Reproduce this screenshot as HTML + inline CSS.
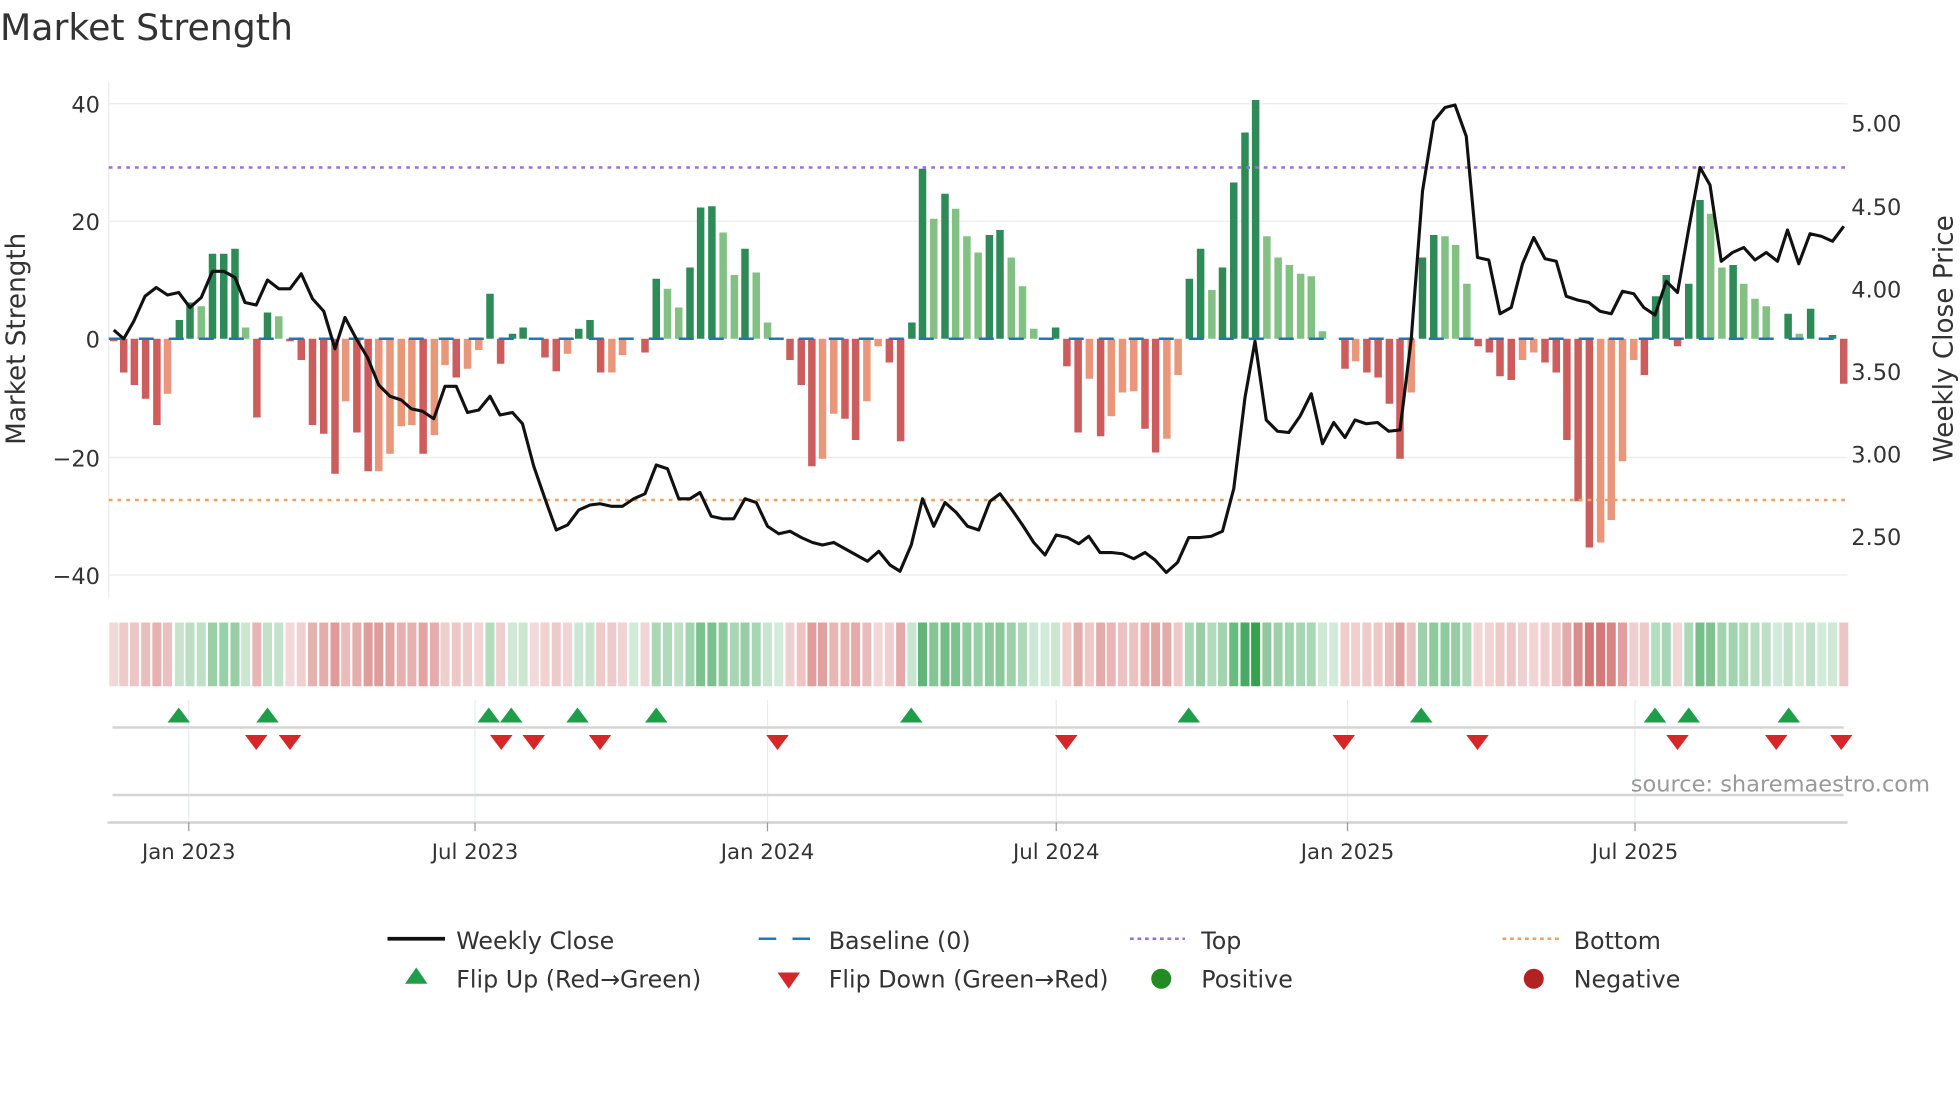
<!DOCTYPE html>
<html><head><meta charset="utf-8"><style>
html,body{margin:0;padding:0;background:#fff;}
svg{display:block;}
text{font-family:"DejaVu Sans","Liberation Sans",sans-serif;fill:#333;}
</style></head><body>
<svg id="s" width="1960" height="1102" viewBox="0 0 1568 881.6" xmlns="http://www.w3.org/2000/svg">
<text x="0" y="32" font-size="29">Market Strength</text>
<g stroke="#ececec" stroke-width="1">
<line x1="87" y1="83" x2="1478" y2="83"/><line x1="87" y1="177" x2="1478" y2="177"/>
<line x1="87" y1="366" x2="1478" y2="366"/><line x1="87" y1="460" x2="1478" y2="460"/>
<line x1="87" y1="65" x2="87" y2="478"/>
</g>
<g font-size="18" text-anchor="end">
<text x="80" y="90">40</text><text x="80" y="184">20</text><text x="80" y="278">0</text>
<text x="80" y="373">−20</text><text x="80" y="467">−40</text>
</g>
<g font-size="18">
<text x="1481" y="105">5.00</text><text x="1481" y="172">4.50</text><text x="1481" y="238">4.00</text>
<text x="1481" y="304">3.50</text><text x="1481" y="370">3.00</text><text x="1481" y="436">2.50</text>
</g>
<text font-size="21" text-anchor="middle" transform="translate(20,271) rotate(-90)">Market Strength</text>
<text font-size="21" text-anchor="middle" transform="translate(1562,271) rotate(-90)">Weekly Close Price</text>
<g id="bars"></g>
<line x1="87" y1="271" x2="1478" y2="271" stroke="#1f77b4" stroke-width="2" stroke-dasharray="12 12"/>
<line x1="87" y1="134" x2="1478" y2="134" stroke="#9b6fdc" stroke-width="2" stroke-dasharray="3 4"/>
<line x1="87" y1="400" x2="1478" y2="400" stroke="#f0a060" stroke-width="2" stroke-dasharray="3 4"/>
<polyline id="price" fill="none" stroke="#111" stroke-width="2.5" stroke-linejoin="round"/>
<g id="heat"></g>
<g stroke="#e8ecef" stroke-width="1">
<line x1="151" y1="560" x2="151" y2="658"/><line x1="380" y1="560" x2="380" y2="658"/>
<line x1="614" y1="560" x2="614" y2="658"/><line x1="845" y1="560" x2="845" y2="658"/>
<line x1="1078" y1="560" x2="1078" y2="658"/><line x1="1308" y1="560" x2="1308" y2="658"/>
</g>
<line x1="90" y1="582" x2="1475" y2="582" stroke="#d5d5d5" stroke-width="2"/>
<line x1="90" y1="636" x2="1475" y2="636" stroke="#d5d5d5" stroke-width="2"/>
<line x1="86" y1="658" x2="1478" y2="658" stroke="#d0d0d0" stroke-width="2"/>
<g id="marks"></g>
<g stroke="#999" stroke-width="1">
<line x1="151" y1="658" x2="151" y2="665"/><line x1="380" y1="658" x2="380" y2="665"/>
<line x1="614" y1="658" x2="614" y2="665"/><line x1="845" y1="658" x2="845" y2="665"/>
<line x1="1078" y1="658" x2="1078" y2="665"/><line x1="1308" y1="658" x2="1308" y2="665"/>
</g>
<g font-size="17" text-anchor="middle">
<text x="151" y="687">Jan 2023</text><text x="380" y="687">Jul 2023</text><text x="614" y="687">Jan 2024</text>
<text x="845" y="687">Jul 2024</text><text x="1078" y="687">Jan 2025</text><text x="1308" y="687">Jul 2025</text>
</g>
<text x="1544" y="633" font-size="18" text-anchor="end" style="fill:#999">source: sharemaestro.com</text>
<g font-size="19">
<line x1="310" y1="751" x2="356" y2="751" stroke="#111" stroke-width="3"/>
<text x="365" y="759">Weekly Close</text>
<line x1="607" y1="751" x2="651" y2="751" stroke="#1f77b4" stroke-width="2" stroke-dasharray="14 13"/>
<text x="663" y="759">Baseline (0)</text>
<line x1="904" y1="751" x2="948" y2="751" stroke="#9b6fdc" stroke-width="2" stroke-dasharray="3 3"/>
<text x="961" y="759">Top</text>
<line x1="1202" y1="751" x2="1248" y2="751" stroke="#f0a060" stroke-width="2" stroke-dasharray="3 3"/>
<text x="1259" y="759">Bottom</text>
<polygon points="333,774 342,787 324,787" fill="#1f9e4a"/>
<text x="365" y="790">Flip Up (Red→Green)</text>
<polygon points="622,778 640,778 631,791" fill="#d62728"/>
<text x="663" y="790">Flip Down (Green→Red)</text>
<circle cx="929" cy="783" r="8" fill="#228b22"/>
<text x="961" y="790">Positive</text>
<circle cx="1227" cy="783" r="8" fill="#b22222"/>
<text x="1259" y="790">Negative</text>
</g>
</svg>
<script>
var NS="http://www.w3.org/2000/svg";
function el(t,a,p){var e=document.createElementNS(NS,t);for(var k in a)e.setAttribute(k,a[k]);p.appendChild(e);return e;}
var z1=[[198,-27,'r'],[215,-37,'r'],[233,-48,'r'],[251,-69,'r'],[268,-44,'s'],[287,15,'g'],[304,29,'g'],[322,26,'l'],[340,68,'g'],[358,68,'g'],[376,72,'g'],[393,9,'l'],[411,-63,'r'],[428,21,'g'],[446,18,'l'],[464,-2,'r'],[482,-17,'r'],[500,-69,'r'],[518,-76,'r'],[536,-108,'r'],[553,-50,'s'],[571,-75,'r'],[589,-106,'r'],[606,-106,'s'],[624,-92,'s'],[642,-70,'s'],[659,-69,'s'],[677,-92,'r'],[695,-77,'s'],[712,-21,'s'],[730,-31,'r'],[748,-24,'s'],[766,-9,'s'],[784,36,'g'],[801,-20,'r'],[820,4,'g'],[837,9,'g'],[855,-1,'r'],[872,-15,'r'],[890,-26,'r'],[908,-12,'s'],[926,8,'g'],[944,15,'g'],[961,-27,'r'],[979,-27,'s'],[996,-13,'s'],[1014,0,'l'],[1032,-11,'r'],[1050,48,'g'],[1068,40,'l'],[1086,25,'l'],[1104,57,'g'],[1121,105,'g'],[1139,106,'g'],[1157,85,'l'],[1175,51,'l'],[1192,72,'g'],[1210,53,'l'],[1228,13,'l'],[1246,0,'l'],[1264,-17,'r'],[1282,-37,'r'],[1299,-102,'r'],[1316,-96,'s'],[1334,-60,'s'],[1352,-64,'r'],[1369,-81,'r'],[1387,-50,'s'],[1405,-6,'s'],[1423,-19,'r'],[1441,-82,'r'],[1459,13,'g'],[1476,136,'g'],[1494,96,'l'],[1512,116,'g'],[1529,104,'l'],[1547,82,'l'],[1565,69,'l']];
var z2=[[15,83,'g'],[32,87,'g'],[50,65,'l'],[68,42,'l'],[86,8,'l'],[104,0,'l'],[121,9,'g'],[139,-22,'r'],[157,-75,'r'],[175,-32,'s'],[193,-78,'r'],[210,-62,'s'],[228,-43,'s'],[246,-42,'s'],[264,-72,'r'],[281,-91,'r'],[299,-80,'s'],[317,-29,'s'],[335,48,'g'],[353,72,'g'],[371,39,'l'],[388,57,'g'],[406,125,'g'],[424,165,'g'],[441,191,'g'],[459,82,'l'],[477,65,'l'],[495,59,'l'],[513,52,'l'],[530,50,'l'],[548,6,'l'],[566,0,'l'],[584,-24,'r'],[601,-18,'s'],[619,-27,'r'],[637,-31,'r'],[655,-52,'r'],[672,-96,'r'],[690,-43,'s'],[708,65,'g'],[726,83,'g'],[744,82,'l'],[761,75,'l'],[779,44,'l'],[797,-6,'r'],[815,-11,'r'],[832,-30,'r'],[850,-33,'r'],[868,-17,'s'],[886,-11,'s'],[904,-19,'r'],[922,-27,'r'],[939,-81,'r'],[957,-130,'r'],[975,-167,'r'],[993,-163,'s'],[1010,-145,'s'],[1028,-98,'s'],[1046,-17,'s'],[1063,-29,'r'],[1081,34,'g'],[1098,51,'g'],[1116,-6,'r'],[1134,44,'g'],[1152,111,'g'],[1169,100,'l'],[1187,57,'l'],[1205,59,'g'],[1222,44,'l'],[1240,32,'l'],[1258,26,'l'],[1276,0,'l'],[1293,20,'g'],[1311,4,'l'],[1329,24,'g'],[1347,0,'l'],[1364,3,'g'],[1382,-36,'r']];
var bars=[[91,-2,'r']];
z1.forEach(function(b){bars.push([b[0]/2,b[1],b[2]]);});
z2.forEach(function(b){bars.push([784+b[0]/2,b[1],b[2]]);});
var col={g:'#2e8b57',l:'#82c083',r:'#cd5c5c',s:'#e9967a'};
var bg=document.getElementById('bars'),hg=document.getElementById('heat');
bars.forEach(function(b){
 var x=b[0],h=b[1];
 if(h!==0){var y=h>0?271-h:271;el('rect',{x:x-3,y:y,width:6,height:Math.abs(h),fill:col[b[2]]},bg);}
 var c;
 if(h>=0){c='rgba(52,160,80,'+Math.min(1,0.22+0.78*Math.abs(h)/191)+')';}
 else{c='rgba(200,90,88,'+Math.min(0.85,0.22+0.6*Math.abs(h)/167)+')';}
 el('rect',{x:x-3.6,y:498,width:7.2,height:51,fill:c},hg);
});
var p=[[91,264],[99,271],[107,257],[116,237],[125,230],[134,236],[143,234],[152,246],[161,238],[170,217],[179,217],[188,222],[196,242],[205,244],[214,224],[223,231],[232,231],[241,219],[250,239],[259,249],[268,279],[276,254],[285,271],[294,286],[303,308],[312,317],[321,320],[329,327],[338,329],[347,335],[356,309],[365,309],[374,330],[383,328],[392,317],[400,332],[410,330],[418,339],[427,373],[436,399],[445,424],[454,420],[463,408],[472,404],[480,403],[489,405],[498,405],[507,399],[516,395],[525,372],[534,375],[543,399],[552,399],[560,394],[569,413],[578,415],[587,415],[596,399],[605,402],[614,421],[623,427],[632,425],[641,430],[650,434],[658,436],[667,434],[676,439],[685,444],[694,449],[703,441],[712,452],[720,457],[729,436],[738,399],[747,421],[756,402],[765,410],[774,421],[783,424],[792,401],[800,395],[809,407],[818,420],[827,434],[836,444],[845,428],[854,430],[863,435],[871,429],[880,442],[889,442],[898,443],[907,447],[916,442],[924,448],[933,458],[942,450],[951,430],[960,430],[969,429],[978,425],[987,391],[996,318],[1004,273],[1013,336],[1022,345],[1031,346],[1040,333],[1049,315],[1058,355],[1067,338],[1076,350],[1084,336],[1093,339],[1102,338],[1111,345],[1120,344],[1129,271],[1138,153],[1147,97],[1156,86],[1164,84],[1173,109],[1182,206],[1191,208],[1200,251],[1209,246],[1218,211],[1227,190],[1236,207],[1245,209],[1253,237],[1262,240],[1271,242],[1280,249],[1289,251],[1298,233],[1307,235],[1315,246],[1324,252],[1333,225],[1342,234],[1351,183],[1360,134],[1368,148],[1377,209],[1386,202],[1395,198],[1404,208],[1413,202],[1422,209],[1430,184],[1439,211],[1448,187],[1457,189],[1466,193],[1475,181]];
document.getElementById('price').setAttribute('points',p.map(function(q){return q.join(',');}).join(' '));
var mg=document.getElementById('marks');
[143,214,391,409,462,525,729,951,1137,1324,1351,1431].forEach(function(x){el('polygon',{points:(x)+',566 '+(x+9)+',578 '+(x-9)+',578',fill:'#1f9e4a'},mg);});
[205,232,401,427,480,622,853,1075,1182,1342,1421,1473].forEach(function(x){el('polygon',{points:(x-9)+',588 '+(x+9)+',588 '+x+',600',fill:'#d62728'},mg);});
</script>
</body></html>
